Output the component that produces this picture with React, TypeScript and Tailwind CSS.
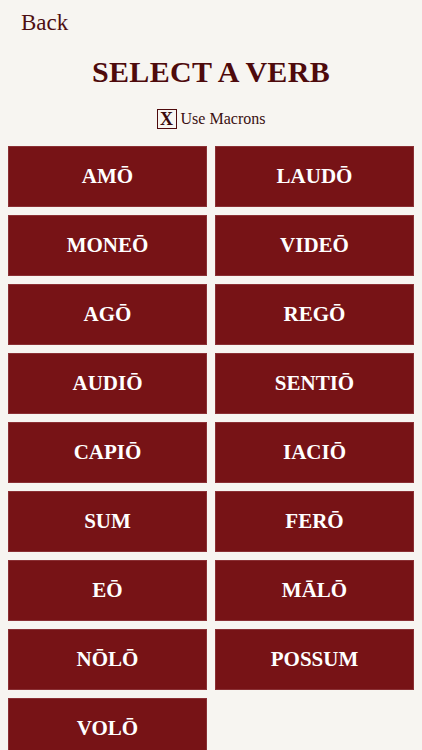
import React from "react";

const verbs = ["AMŌ","LAUDŌ","MONEŌ","VIDEŌ","AGŌ","REGŌ","AUDIŌ","SENTIŌ","CAPIŌ","IACIŌ","SUM","FERŌ","EŌ","MĀLŌ","NŌLŌ","POSSUM","VOLŌ"];

const serif = { fontFamily: '"Liberation Serif", "DejaVu Serif", serif' };

export default function App() {
  return (
    <div className="w-[422px] h-[750px] overflow-hidden bg-[#f7f5f1]" style={serif}>
      <div className="pl-[21px] pt-[9px] h-[40px] text-[23px] leading-[28px] text-[#4e0f12]" style={serif}>Back</div>
      <h1 className="mt-[14px] text-center text-[30px] leading-[36px] font-bold text-[#4e0a0c] tracking-[0.3px]">SELECT A VERB</h1>
      <div className="mt-[17px] flex items-center justify-center gap-[4px]">
        <div className="w-[20px] h-[20px] border border-[#4e0a0c] flex items-center justify-center text-[18px] font-bold leading-none text-[#3a0a0c]">X</div>
        <span className="text-[16px] text-[#3a1012]">Use Macrons</span>
      </div>
      <div className="mt-[15px] px-[8px] grid grid-cols-2 gap-[8px]">
        {verbs.map((v) => (
          <div key={v} className="h-[61px] bg-[#771316] border border-[#8a3034] flex items-center justify-center pt-[1px] text-white font-bold text-[21px]">
            {v}
          </div>
        ))}
      </div>
    </div>
  );
}
